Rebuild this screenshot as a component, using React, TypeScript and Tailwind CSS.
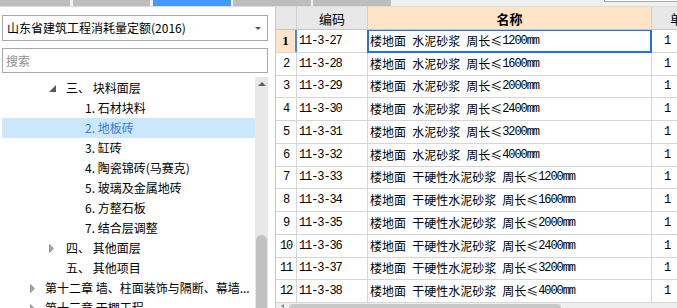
import React from "react";

const rows: [string, string][] = [
  ["11-3-27", "楼地面 水泥砂浆 周长≤1200mm"],
  ["11-3-28", "楼地面 水泥砂浆 周长≤1600mm"],
  ["11-3-29", "楼地面 水泥砂浆 周长≤2000mm"],
  ["11-3-30", "楼地面 水泥砂浆 周长≤2400mm"],
  ["11-3-31", "楼地面 水泥砂浆 周长≤3200mm"],
  ["11-3-32", "楼地面 水泥砂浆 周长≤4000mm"],
  ["11-3-33", "楼地面 干硬性水泥砂浆 周长≤1200mm"],
  ["11-3-34", "楼地面 干硬性水泥砂浆 周长≤1600mm"],
  ["11-3-35", "楼地面 干硬性水泥砂浆 周长≤2000mm"],
  ["11-3-36", "楼地面 干硬性水泥砂浆 周长≤2400mm"],
  ["11-3-37", "楼地面 干硬性水泥砂浆 周长≤3200mm"],
  ["11-3-38", "楼地面 干硬性水泥砂浆 周长≤4000mm"],
];

function Mixed({ text }: { text: string }) {
  const parts = text.split(/([\x20-\x7E]+)/).filter((p) => p.length > 0);
  return (
    <>
      {parts.map((p, i) =>
        /^[\x20-\x7E]+$/.test(p) ? (
          <span key={i} className="font-['Liberation_Mono',monospace] text-[12px] tracking-[-1.1px] whitespace-pre">
            {p}
          </span>
        ) : (
          <span key={i} className="whitespace-pre">{p}</span>
        )
      )}
    </>
  );
}

function TriDown() {
  return (
    <svg width="7" height="7" viewBox="0 0 7 7">
      <polygon points="7,0 7,7 0,7" fill="#5a5a5a" />
    </svg>
  );
}

function TriRight() {
  return (
    <svg width="5" height="9" viewBox="0 0 5 9">
      <polygon points="0.5,0.5 4.5,4.5 0.5,8.5" fill="#a8a8a8" stroke="#8c8c8c" strokeWidth="0.8" />
    </svg>
  );
}

type TreeRow = {
  text: string;
  level: 1 | 2 | 3;
  tri?: "down" | "right";
  selected?: boolean;
};

const tree: TreeRow[] = [
  { text: "三、 块料面层", level: 2, tri: "down" },
  { text: "1. 石材块料", level: 3 },
  { text: "2. 地板砖", level: 3, selected: true },
  { text: "3. 缸砖", level: 3 },
  { text: "4. 陶瓷锦砖(马赛克)", level: 3 },
  { text: "5. 玻璃及金属地砖", level: 3 },
  { text: "6. 方整石板", level: 3 },
  { text: "7. 结合层调整", level: 3 },
  { text: "四、 其他面层", level: 2, tri: "right" },
  { text: "五、 其他项目", level: 2 },
  { text: "第十二章 墙、柱面装饰与隔断、幕墙...", level: 1, tri: "right" },
  { text: "第十三章 天棚工程", level: 1, tri: "right" },
];

function TreeItem({ row }: { row: TreeRow }) {
  const cfg =
    row.level === 1
      ? { pl: "pl-[28px]", slot: "w-[15px]" }
      : row.level === 2
      ? { pl: "pl-[47px]", slot: "w-[17px]" }
      : { pl: "pl-[83px]", slot: "w-0" };
  return (
    <div
      className={`h-[20px] shrink-0 flex items-center whitespace-nowrap ${cfg.pl} ${
        row.selected ? "bg-[#cce8ff] text-[#3d7bd9]" : "text-black"
      }`}
    >
      <div className={`${cfg.slot} shrink-0 flex items-center`}>
        {row.tri === "down" && <TriDown />}
        {row.tri === "right" && <TriRight />}
      </div>
      <span>{row.text}</span>
    </div>
  );
}

export default function App() {
  return (
    <div className="w-[677px] h-[308px] overflow-hidden flex flex-col bg-white font-['Noto_Sans_CJK_SC',sans-serif] text-[12px] leading-none">
      {/* top tabs bar */}
      <div className="h-[6px] shrink-0 flex bg-[#f0f0f0]">
        <div className="w-[70px] bg-[#bdbdbd]" />
        <div className="w-[77px] ml-[3px] bg-[#bdbdbd]" />
        <div className="w-[78px] ml-[3px] bg-[#4499ff]" />
        <div className="w-[78px] ml-[2px] bg-[#bdbdbd]" />
        <div className="w-[78px] ml-[2px] bg-[#bdbdbd]" />
        <div className="flex-1 flex justify-end">
          <div className="w-[73px] h-[2px] bg-white border-l border-b border-[#a8a8a8]" />
        </div>
      </div>
      <div className="h-px shrink-0 bg-[#dcdcdc]" />

      <div className="flex-1 flex min-h-0">
        {/* left panel */}
        <div className="w-[275px] shrink-0 flex flex-col bg-white pt-[8px]">
          <div className="ml-[2px] w-[266px] h-[26px] border border-[#a9a9a9] flex items-center pl-[4px] pr-[6px] shrink-0">
            <span className="flex-1 text-black">山东省建筑工程消耗量定额(2016)</span>
            <svg width="6" height="3" viewBox="0 0 6 3">
              <polygon points="0,0 6,0 3,3" fill="#5a5a5a" />
            </svg>
          </div>
          <div className="ml-[2px] mt-[7px] w-[266px] h-[25px] border border-[#a9a9a9] flex items-center pl-[3px] shrink-0">
            <span className="text-[#8e8e8e]">搜索</span>
          </div>
          <div className="flex-1 min-h-0 flex mt-[4px]">
            <div className="w-[253px] ml-[2px] flex flex-col overflow-hidden pt-[1px]">
              {tree.map((r, i) => (
                <TreeItem key={i} row={r} />
              ))}
            </div>
            <div className="w-[13px] bg-[#e8e8e8] flex flex-col items-center">
              <div className="h-[10px] flex items-center justify-center pt-[3px]">
                <svg width="8" height="4" viewBox="0 0 8 4">
                  <polygon points="0,4 8,4 4,0" fill="#606060" />
                </svg>
              </div>
              <div className="flex-1" />
              <div className="w-[11px] h-[73px] bg-[#c1c1c1] rounded-t-[6px]" />
            </div>
          </div>
        </div>
        <div className="w-px shrink-0 bg-[#c8c8c8]" />

        {/* grid */}
        <div className="flex-1 min-w-0 flex flex-col overflow-hidden">
          <div className="h-[23px] shrink-0 flex border-b border-[#c6c6c6] whitespace-nowrap">
            <div className="w-[21px] shrink-0 bg-[#e8e8e8] border-r border-[#cfcfcf]" />
            <div className="w-[71px] shrink-0 bg-[#e8e8e8] border-r border-[#cfcfcf] flex items-center justify-center text-[13px] text-black">
              编码
            </div>
            <div className="w-[284px] shrink-0 bg-[#ffe4c7] border-r border-[#cfcfcf] flex items-center justify-center text-[13px] font-bold text-black">
              名称
            </div>
            <div className="flex-1 bg-[#e8e8e8] flex items-center pl-[18px] text-[13px] text-black">单位</div>
          </div>
          <div className="flex-1 min-h-0 flex flex-col overflow-hidden">
            {rows.map(([code, name], i) => (
              <div key={i} className="h-[22.75px] shrink-0 flex border-b border-[#d6d6d6] whitespace-nowrap text-black">
                {i === 0 ? (
                  <div className="w-[21px] shrink-0 bg-[#ffe4c7] border-r-2 border-[#3b8cf0] flex items-center justify-center font-['Liberation_Serif',serif] font-bold text-[13px]">
                    1
                  </div>
                ) : (
                  <div className="w-[21px] shrink-0 border-r border-[#d6d6d6] flex items-center justify-center font-['Liberation_Mono',monospace] text-[12px] tracking-[-1.1px]">
                    {i + 1}
                  </div>
                )}
                <div className="w-[71px] shrink-0 border-r border-[#d6d6d6] flex items-center pl-[2px]">
                  <Mixed text={code} />
                </div>
                <div className="relative w-[284px] shrink-0 border-r border-[#d6d6d6] flex items-center pl-[2px] text-[12px]">
                  <Mixed text={name} />
                  {i === 0 && (
                    <div className="absolute -top-px -left-px -right-px -bottom-px border-2 border-[#1f72ea]" />
                  )}
                </div>
                <div className="flex-1 flex items-center pl-[12px] font-['Liberation_Mono',monospace] text-[12px]">1</div>
              </div>
            ))}
          </div>
          <div className="h-[5px] shrink-0 bg-[#eeeeee] flex items-end">
            <div className="w-[13px] h-full flex items-center justify-center">
              <svg width="3" height="4" viewBox="0 0 3 4">
                <polygon points="3,0 3,4 0,2" fill="#8a8a8a" />
              </svg>
            </div>
            <div className="w-[272px] h-[4px] bg-[#c8c8c8] rounded-t-[5px]" />
          </div>
        </div>
      </div>
    </div>
  );
}
